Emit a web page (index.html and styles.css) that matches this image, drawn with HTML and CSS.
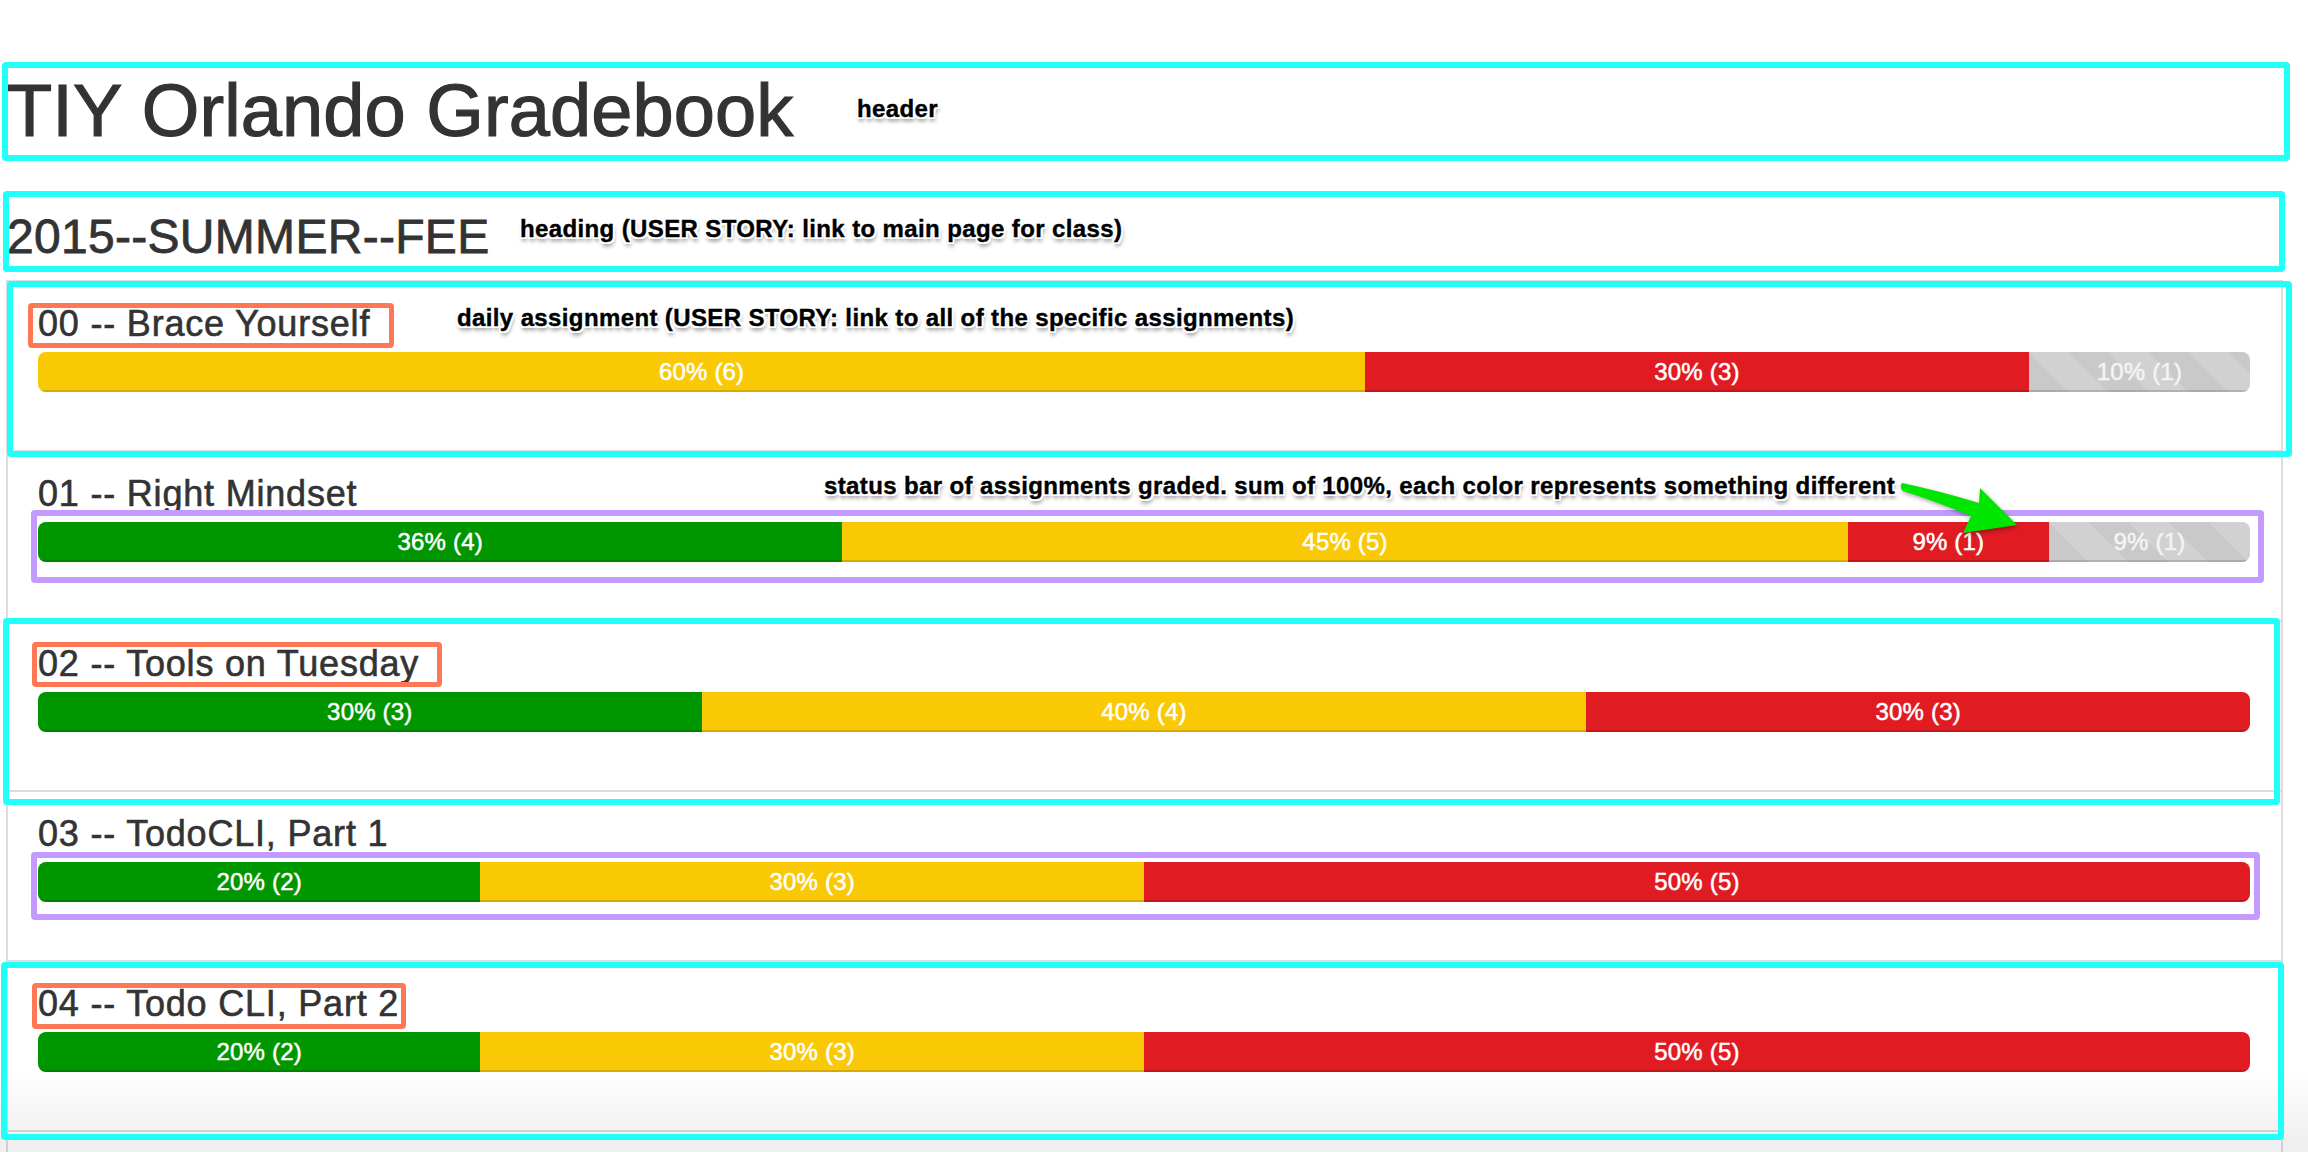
FILE: index.html
```html
<!DOCTYPE html>
<html lang="en">
<head>
<meta charset="utf-8">
<title>TIY Orlando Gradebook</title>
<link rel="stylesheet" href="styles.css">
</head>
<body>
<div class="page">
  <header class="site-header">
    <h1 class="site-title">TIY Orlando Gradebook</h1>
  </header>
  <main class="course">
    <h2 class="course-title">2015--SUMMER--FEE</h2>
    <ul class="assignments">
      <li class="assignment">
        <h3 class="assignment-title">00 -- Brace Yourself</h3>
        <div class="progress">
          <div class="seg seg-partial" style="width:60%">60% (6)</div>
          <div class="seg seg-fail" style="width:30%">30% (3)</div>
          <div class="seg seg-pending" style="width:10%">10% (1)</div>
        </div>
      </li>
      <li class="assignment">
        <h3 class="assignment-title">01 -- Right Mindset</h3>
        <div class="progress">
          <div class="seg seg-complete" style="width:36.3636%">36% (4)</div>
          <div class="seg seg-partial" style="width:45.4545%">45% (5)</div>
          <div class="seg seg-fail" style="width:9.0909%">9% (1)</div>
          <div class="seg seg-pending" style="width:9.0909%">9% (1)</div>
        </div>
      </li>
      <li class="assignment">
        <h3 class="assignment-title">02 -- Tools on Tuesday</h3>
        <div class="progress">
          <div class="seg seg-complete" style="width:30%">30% (3)</div>
          <div class="seg seg-partial" style="width:40%">40% (4)</div>
          <div class="seg seg-fail" style="width:30%">30% (3)</div>
        </div>
      </li>
      <li class="assignment">
        <h3 class="assignment-title">03 -- TodoCLI, Part 1</h3>
        <div class="progress">
          <div class="seg seg-complete" style="width:20%">20% (2)</div>
          <div class="seg seg-partial" style="width:30%">30% (3)</div>
          <div class="seg seg-fail" style="width:50%">50% (5)</div>
        </div>
      </li>
      <li class="assignment">
        <h3 class="assignment-title">04 -- Todo CLI, Part 2</h3>
        <div class="progress">
          <div class="seg seg-complete" style="width:20%">20% (2)</div>
          <div class="seg seg-partial" style="width:30%">30% (3)</div>
          <div class="seg seg-fail" style="width:50%">50% (5)</div>
        </div>
      </li>
    </ul>
  </main>

  <div class="fade"></div>

  <div class="annotations">
    <div class="box cyan a-header"></div>
    <div class="box cyan a-heading"></div>
    <div class="box cyan a-item00"></div>
    <div class="box cyan a-item02"></div>
    <div class="box cyan a-item04"></div>

    <div class="box orange o-00"></div>
    <div class="box orange o-02"></div>
    <div class="box orange o-04"></div>

    <div class="box purple p-01"></div>
    <div class="box purple p-03"></div>

    <div class="note l-header">header</div>
    <div class="note l-heading">heading (USER STORY: link to main page for class)</div>
    <div class="note l-daily">daily assignment (USER STORY: link to all of the specific assignments)</div>
    <div class="note l-status">status bar of assignments graded. sum of 100%, each color represents something different</div>

    <svg class="arrow" width="130" height="62" viewBox="0 0 130 62" xmlns="http://www.w3.org/2000/svg">
      <path d="M7,5 Q45,13 84,25 L85,10 L122,47 L68,55 L76,38 Q40,23 8,13 Q4,9 7,5 Z" fill="#00e600"/>
    </svg>
  </div>
</div>
</body>
</html>
```

FILE: styles.css
```css
* {
  box-sizing: border-box;
}

html,
body {
  margin: 0;
  padding: 0;
  background: #ffffff;
  overflow: hidden;
}

body {
  font-family: "Liberation Sans", Arial, Helvetica, sans-serif;
  color: #333333;
}

.page {
  position: relative;
  width: 2308px;
  height: 1152px;
  overflow: hidden;
}

/* ---------- page content ---------- */

.site-header {
  padding: 71px 0 0 7px;
}

.site-title {
  margin: 0;
  font-size: 74px;
  line-height: 80px;
  font-weight: normal;
  letter-spacing: 0.1px;
  -webkit-text-stroke: 1.2px #333333;
}

.course-title {
  margin: 58px 0 0 7px;
  font-size: 48px;
  line-height: 56px;
  font-weight: normal;
  letter-spacing: 0.3px;
  -webkit-text-stroke: 0.8px #333333;
}

.assignments {
  list-style: none;
  margin: 15px 25px 0 6px;
  padding: 0 0 20px;
  border: 2px solid #dddddd;
  border-bottom: 0;
}

.assignment {
  padding: 22px 31px 58px 30px;
  border-bottom: 2px solid #dddddd;
}

.assignment-title {
  margin: 0 0 8px;
  font-size: 36px;
  line-height: 40px;
  font-weight: normal;
  color: #333333;
  letter-spacing: 0.8px;
  -webkit-text-stroke: 0.6px #333333;
}

.progress {
  display: flex;
  height: 40px;
  border-radius: 8px;
  overflow: hidden;
  background: #f5f5f5;
}

.seg {
  flex: none;
  height: 40px;
  line-height: 40px;
  text-align: center;
  color: #ffffff;
  font-size: 24px;
  letter-spacing: 0.2px;
  white-space: nowrap;
  overflow: hidden;
  -webkit-text-stroke: 0.5px currentColor;
  box-shadow: inset 0 -2px 0 rgba(0, 0, 0, 0.15);
}

.seg-complete {
  background-color: #009600;
}

.seg-partial {
  background-color: #fac905;
}

.seg-fail {
  background-color: #e11b22;
}

.seg-pending {
  background-color: #c9c9c9;
  color: #f4f4f4;
  background-image: linear-gradient(45deg,
      rgba(255, 255, 255, 0.15) 25%, transparent 25%,
      transparent 50%, rgba(255, 255, 255, 0.15) 50%,
      rgba(255, 255, 255, 0.15) 75%, transparent 75%, transparent);
  background-size: 80px 80px;
}

.fade {
  position: absolute;
  left: 0;
  right: 0;
  top: 1070px;
  height: 82px;
  background: linear-gradient(to bottom, rgba(0, 0, 0, 0), rgba(0, 0, 0, 0.065));
  pointer-events: none;
}

/* ---------- annotation overlay ---------- */

.annotations {
  position: absolute;
  left: 0;
  top: 0;
  width: 2308px;
  height: 1152px;
  pointer-events: none;
}

.box {
  position: absolute;
  border-style: solid;
  border-width: 6px;
  border-radius: 4px;
}

.cyan {
  border-color: #20fff9;
}

.orange {
  border-color: #ff7855;
  border-width: 5px;
}

.purple {
  border-color: #c39bff;
}

.a-header { left: 2px; top: 62px; width: 2288px; height: 99px; }
.a-heading { left: 3px; top: 191px; width: 2282px; height: 81px; }
.a-item00 { left: 7px; top: 281px; width: 2285px; height: 176px; }
.a-item02 { left: 3px; top: 618px; width: 2277px; height: 187px; }
.a-item04 { left: 1px; top: 962px; width: 2283px; height: 178px; }

.o-00 { left: 28px; top: 303px; width: 366px; height: 45px; }
.o-02 { left: 32px; top: 642px; width: 410px; height: 45px; }
.o-04 { left: 32px; top: 983px; width: 374px; height: 46px; }

.p-01 { left: 31px; top: 510px; width: 2233px; height: 73px; }
.p-03 { left: 31px; top: 852px; width: 2229px; height: 68px; }

.note {
  position: absolute;
  font-family: "Liberation Sans", Arial, Helvetica, sans-serif;
  font-weight: bold;
  font-size: 24px;
  line-height: 28px;
  letter-spacing: 0.38px;
  color: #000000;
  white-space: nowrap;
  -webkit-text-stroke: 0.4px #000000;
  text-shadow:
    -2px -2px 0 #fff, 2px -2px 0 #fff, -2px 2px 0 #fff, 2px 2px 0 #fff,
    0 -2px 0 #fff, 0 2px 0 #fff, -2px 0 0 #fff, 2px 0 0 #fff,
    1px 4px 4px rgba(0, 0, 0, 0.55);
}

.l-header { left: 857px; top: 95px; }
.l-heading { left: 520px; top: 215px; }
.l-daily { left: 457px; top: 304px; }
.l-status { left: 824px; top: 472px; }

.arrow {
  position: absolute;
  left: 1895px;
  top: 478px;
  overflow: visible;
  filter: drop-shadow(1px 2px 2px rgba(0, 0, 0, 0.35));
}
```
